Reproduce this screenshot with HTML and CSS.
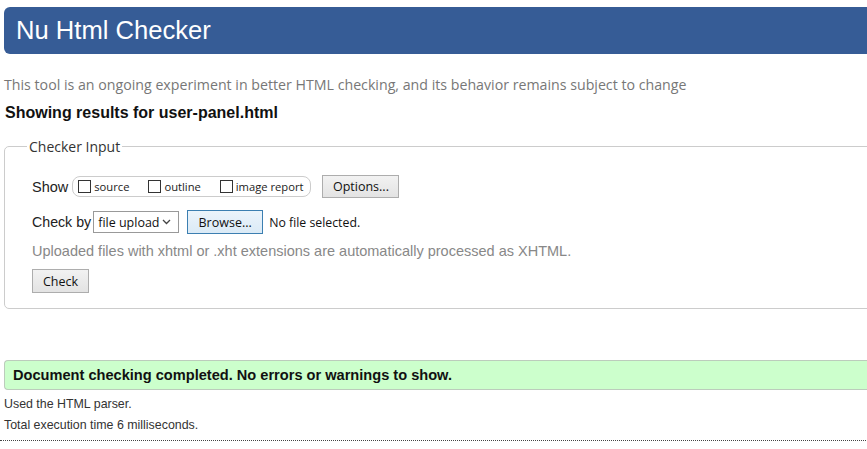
FILE: index.html
```html
<!DOCTYPE html>
<html>
<head>
<meta charset="utf-8">
<link rel="stylesheet" href="styles.css">
</head>
<body>
<h1 class="title">Nu Html Checker</h1>
<p class="intro">This tool is an ongoing experiment in better HTML checking, and its behavior remains subject to change</p>
<p class="showing">Showing results for user-panel.html</p>
<fieldset class="input">
  <legend class="legend">Checker Input</legend>
  <div class="row show-row">
    <span class="label">Show</span>
    <span class="pill">
      <label class="opt"><span class="box"></span>source</label>
      <label class="opt"><span class="box"></span>outline</label>
      <label class="opt"><span class="box"></span>image report</label>
    </span>
    <button class="btn options">Options...</button>
  </div>
  <div class="row by-row">
    <span class="label">Check by</span>
    <span class="select">file upload <svg class="chev" width="9" height="6" viewBox="0 0 9 6"><path d="M1 1 L4.5 4.5 L8 1" fill="none" stroke="#444" stroke-width="1.3"/></svg></span>
    <button class="btn browse">Browse...</button>
    <span class="nofile">No file selected.</span>
  </div>
  <p class="note">Uploaded files with xhtml or .xht extensions are automatically processed as XHTML.</p>
  <button class="btn check">Check</button>
</fieldset>
<p class="success">Document checking completed. No errors or warnings to show.</p>
<p class="meta">Used the HTML parser.</p>
<p class="meta">Total execution time 6 milliseconds.</p>
<div class="rule"></div>
</body>
</html>
```
FILE: styles.css
```css
html, body {
  margin: 0;
  padding: 0;
  background: #fff;
  overflow: hidden;
}
body {
  width: 900px;
  padding: 7px 0 0 4px;
  font-family: "Liberation Sans", Arial, sans-serif;
  color: #222;
}
.title {
  margin: 0;
  height: 47px;
  box-sizing: border-box;
  padding: 0 0 0 12px;
  background: #365c96;
  color: #fff;
  border-radius: 6px 0 0 6px;
  font-weight: normal;
  font-size: 25.6px;
  line-height: 47px;
}
.intro {
  margin: 21px 0 0 0;
  font-family: "Open Sans", sans-serif;
  font-size: 14.2px;
  line-height: 20px;
  color: #777;
}
.showing {
  margin: 8px 0 0 1px;
  font-weight: bold;
  font-size: 16px;
  line-height: 20px;
  color: #111;
}
.input {
  margin: 14px 0 0 0;
  padding: 10px 27px 15px 27px;
  border: 1px solid #ccc;
  border-radius: 5px;
  min-width: 0;
}
.legend {
  margin-left: -5px;
  padding: 0 2px;
  font-family: "Open Sans", sans-serif;
  font-size: 14px;
  color: #333;
}
.row {
  display: flex;
  align-items: center;
}
.label {
  font-size: 14.5px;
  color: #222;
}
.show-row { margin-top: 9px; }
.pill {
  display: flex;
  align-items: center;
  margin-left: 4px;
  height: 19px;
  border: 1px solid #ccc;
  border-radius: 8px;
  padding: 0 7px 0 5px;
}
.opt {
  display: flex;
  align-items: center;
  font-family: "Open Sans", sans-serif;
  font-size: 11.2px;
  color: #222;
  margin-right: 19px;
}
.opt:last-child { margin-right: 0; }
.box {
  display: inline-block;
  width: 11px;
  height: 11px;
  border: 1px solid #333;
  margin-right: 3px;
  background: #fff;
}
.btn {
  font-family: "Open Sans", sans-serif;
  font-size: 12.5px;
  color: #111;
  background: linear-gradient(#f2f2f2, #e3e3e3);
  border: 1px solid #adadad;
  border-radius: 0;
  padding: 0;
  margin: 0;
}
.options {
  margin-left: 11px;
  width: 77px;
  height: 23px;
}
.by-row { margin-top: 12px; }
.by-row .label { font-size: 14.2px; }
.select {
  display: flex;
  align-items: center;
  justify-content: space-between;
  margin-left: 2px;
  width: 86px;
  height: 22px;
  box-sizing: border-box;
  border: 1px solid #999;
  padding: 0 7px 0 4px;
  font-family: "Open Sans", sans-serif;
  font-size: 12.5px;
  color: #111;
}
.browse {
  margin-left: 8px;
  width: 76px;
  height: 24px;
  border-color: #3c7fb1;
  background: linear-gradient(#ebf4fb, #dbeaf6);
}
.nofile {
  margin-left: 6px;
  font-family: "Open Sans", sans-serif;
  font-size: 12.3px;
  color: #111;
}
.note {
  margin: 7px 0 0 0;
  font-size: 14.5px;
  line-height: 20px;
  color: #888;
}
.check {
  display: block;
  margin-top: 8px;
  width: 57px;
  height: 24px;
}
.success {
  margin: 51px 0 0 0;
  height: 30px;
  box-sizing: border-box;
  padding-left: 8px;
  background: #ccffcc;
  border: 1px solid #bcccbc;
  border-right: none;
  border-radius: 4px 0 0 4px;
  font-weight: bold;
  font-size: 14.6px;
  line-height: 28px;
  color: #111;
}
.meta {
  margin: 6px 0 0 0;
  font-size: 12.4px;
  line-height: 16px;
  color: #333;
}
.meta + .meta { margin-top: 5px; }
.rule {
  margin: 7px 0 0 -4px;
  border-top: 1px dotted #444;
  width: 900px;
}
```
